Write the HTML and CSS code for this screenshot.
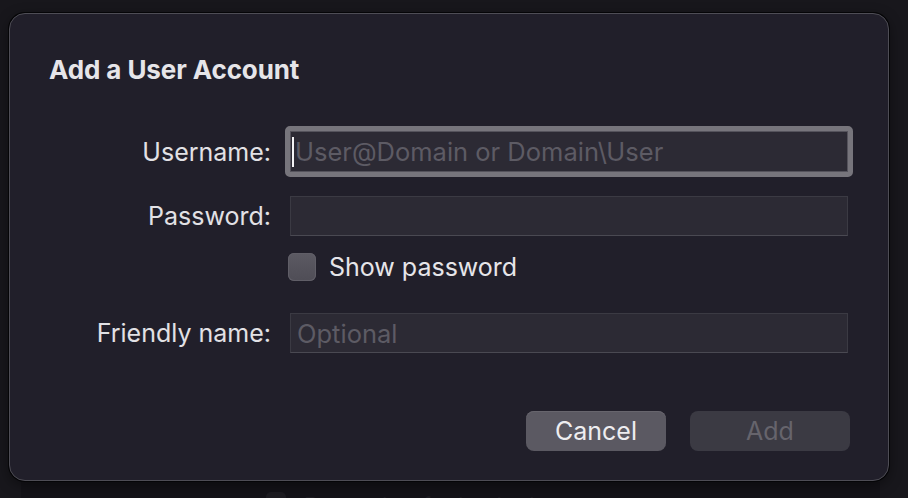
FILE: index.html
```html
<!DOCTYPE html>
<html>
<head>
<meta charset="utf-8">
<link rel="stylesheet" href="styles.css">
</head>
<body>
<div class="stage">
  <div class="dialog">
    <h1 class="title">Add a User Account</h1>
    <div class="form">
      <div class="row row-user">
        <label class="label">Username:</label>
        <div class="ring">
          <div class="field focused"><span class="caret"></span><span class="placeholder">User@Domain or Domain\User</span></div>
        </div>
      </div>
      <div class="row row-pass">
        <label class="label">Password:</label>
        <div class="field"></div>
      </div>
      <div class="row row-check">
        <span class="label"></span>
        <div class="check"><span class="box"></span><span class="check-text">Show password</span></div>
      </div>
      <div class="row row-friendly">
        <label class="label">Friendly name:</label>
        <div class="field"><span class="placeholder">Optional</span></div>
      </div>
    </div>
    <div class="buttons">
      <button class="btn btn-cancel">Cancel</button>
      <button class="btn btn-add">Add</button>
    </div>
  </div>
  <div class="behind">
    <span class="behind-box"></span><span class="behind-text">Remember for backed-up</span>
  </div>
</div>
</body>
</html>
```
FILE: styles.css
```css
* { box-sizing: border-box; }
html, body { margin: 0; padding: 0; }
body {
  background: #18171c;
  width: 908px;
  height: 498px;
  overflow: hidden;
  font-family: "Inter", "Noto Sans", sans-serif;
}
.stage {
  display: flex;
  flex-direction: column;
  padding-top: 13px;
  padding-left: 9px;
}
.dialog {
  width: 880px;
  height: 468px;
  background: #211f2a;
  border-radius: 16px;
  border: 1px solid #4e4d55;
  box-shadow: 0 0 0 1px #050507, 0 4px 14px rgba(0,0,0,0.45);
  padding: 0 40px 0 39px;
  display: flex;
  flex-direction: column;
  position: relative;
  z-index: 1;
}
.title {
  margin: 44px 0 0 0;
  font-size: 26px;
  font-weight: 700;
  color: #e6e5e9;
  line-height: 24px;
  letter-spacing: -0.1px;
}
.form {
  margin-top: 49px;
  display: flex;
  flex-direction: column;
}
.row {
  display: grid;
  grid-template-columns: 222px 558px;
  column-gap: 19px;
  align-items: center;
}
.label {
  text-align: right;
  font-size: 25px;
  line-height: 30px;
  color: #e2e1e5;
  white-space: nowrap;
}
.ring {
  margin: -5px;
  border: 5px solid #77757c;
  border-radius: 5px;
  width: 568px;
}
.field {
  height: 40px;
  background: #2c2a34;
  border: 1px solid #3b3a43;
  border-bottom-color: #4a4952;
  display: flex;
  align-items: center;
  padding-left: 6px;
}
.field.focused {
  border: 1px solid #55535c;
  height: 41px;
  padding-left: 1px;
}
.caret {
  width: 2px;
  height: 30px;
  background: #f4f4f6;
  margin-right: 1px;
}
.placeholder {
  font-size: 25.5px;
  color: #5d5b64;
  white-space: nowrap;
}
.row-pass { margin-top: 24px; }
.row-check { margin-top: 17px; }
.row-check .label { line-height: 28px; }
.row-friendly { margin-top: 32px; }
.check {
  display: flex;
  align-items: center;
  margin-left: -2px;
  height: 28px;
}
.box {
  width: 28px;
  height: 28px;
  border-radius: 6px;
  background: linear-gradient(#5c5a63, #4f4d56);
  box-shadow: inset 0 0 0 1px #605e67;
}
.check-text {
  margin-left: 13px;
  font-size: 25px;
  line-height: 28px;
  color: #e6e5e9;
}
.buttons {
  margin-top: 58px;
  margin-right: -2px;
  display: flex;
  justify-content: flex-end;
  gap: 24px;
}
.btn {
  height: 40px;
  border: none;
  border-radius: 8px;
  font-family: "Inter", "Noto Sans", sans-serif;
  font-size: 25px;
  padding: 0;
}
.btn-cancel {
  width: 140px;
  background: #5b5962;
  color: #eeedf0;
  box-shadow: inset 0 1px 0 #67656d;
}
.btn-add {
  width: 160px;
  background: #3b3a43;
  color: #66646c;
}
.behind {
  margin-left: 12px;
  margin-top: 1px;
  width: 859px;
  height: 30px;
  background: #141318;
  display: flex;
  align-items: flex-start;
  padding-left: 245px;
  padding-top: 10px;
}
.behind-box {
  width: 20px;
  height: 20px;
  border-radius: 5px;
  background: #1d1c21;
}
.behind-text {
  margin-left: 18px;
  font-size: 22px;
  color: #1f1e23;
}
```
